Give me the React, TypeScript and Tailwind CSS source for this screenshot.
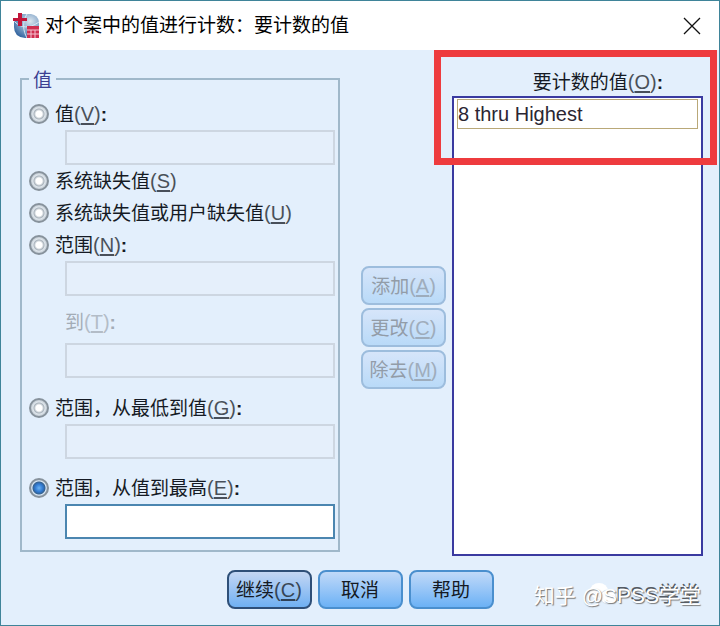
import type { InputHTMLAttributes, ReactNode } from 'react';

type RadioRowProps = {
  id: string;
  text: string;
  mnemonic: string;
  colon?: boolean;
  defaultChecked?: boolean;
};

function Caption({ text, mnemonic, colon }: { text: string; mnemonic: string; colon?: boolean }) {
  return (
    <>
      {text}
      <span className="text-xl leading-6 opacity-75">
        (<u className="underline-offset-2">{mnemonic}</u>)
      </span>
      {colon && <b>:</b>}
    </>
  );
}

function RadioRow({ id, text, mnemonic, colon, defaultChecked }: RadioRowProps) {
  return (
    <div className="flex h-8 items-center gap-1.5 pl-[7px]">
      <input
        type="radio"
        name="value-kind"
        id={id}
        defaultChecked={defaultChecked}
        className="size-5 shrink-0 appearance-none rounded-full border-2 border-[#87929c] bg-[radial-gradient(circle,#fff_0,#fff_3px,#a9b3bc_5px,#dfe6ec_6px,#c3ccd4_8px)] checked:bg-[radial-gradient(circle,#6bb2f2_0,#2f78d0_4px,#35618f_6px,#dbe8f4_7px,#b9c9d8_8px)]"
      />
      <label htmlFor={id} className="pt-px whitespace-nowrap">
        <Caption text={text} mnemonic={mnemonic} colon={colon} />
      </label>
    </div>
  );
}

function ValueInput(props: InputHTMLAttributes<HTMLInputElement>) {
  return (
    <div className="pr-[3px] pl-[43px]">
      <input
        type="text"
        className="block h-[35px] w-full border-2 border-[#4b86b0] bg-white px-1 outline-none disabled:border-[#cdd6e1] disabled:bg-[#e5effb]"
        {...props}
      />
    </div>
  );
}

function SideButton({ children }: { children: ReactNode }) {
  return (
    <button
      type="button"
      disabled
      className="h-[39px] w-full rounded-lg border-2 border-[#9dbddd] bg-linear-to-b from-[#d6e5fa] to-[#b9daf8] pt-0.5 whitespace-nowrap text-[#929ca8]"
    >
      {children}
    </button>
  );
}

function AppIcon() {
  return (
    <svg viewBox="0 0 26 26" className="size-[26px] shrink-0" aria-hidden="true">
      <defs>
        <radialGradient id="globe" cx="0.65" cy="0.3" r="0.8">
          <stop offset="0" stopColor="#dbe5ee" />
          <stop offset="0.5" stopColor="#86a8ca" />
          <stop offset="1" stopColor="#2d5f9c" />
        </radialGradient>
      </defs>
      <path d="M9 1h9q7 1 8 8v16H12Q1 24 1 14V9z" fill="url(#globe)" />
      <path d="M2 9c6 6 14 7 24 0M14 1c-5 8-4 17 0 24" fill="none" stroke="#d9e7f3" strokeWidth="1" />
      <path d="M5 0h4v5h5v3H9v5H5V8H0V5h5z" fill="#c2163a" />
      <rect x="14" y="13" width="12" height="12" fill="#d02f50" />
      <path d="M14 17h12M14 21h12M18 17v8M22 17v8" stroke="#f4c4d0" strokeWidth="1" />
    </svg>
  );
}

export default function App() {
  return (
    <div className="flex min-h-screen flex-col border border-[#3f8499] bg-[#e3effc] font-['Liberation_Sans','Noto_Sans_CJK_SC',sans-serif] text-[19px] leading-6 text-[#151a24]">
      <header className="flex h-[49px] items-center justify-between bg-white pr-[18px] pl-3">
        <div className="flex items-center gap-1.5">
          <AppIcon />
          <h1 className="whitespace-nowrap text-black">对个案中的值进行计数：要计数的值</h1>
        </div>
        <button type="button" aria-label="关闭">
          <svg viewBox="0 0 18 18" className="size-[18px]" aria-hidden="true">
            <path d="M1 1l16 16M17 1L1 17" stroke="#111" strokeWidth="1.3" />
          </svg>
        </button>
      </header>

      <main className="relative grid grid-cols-[341fr_85px_257fr] pr-4 pl-[19px]">
        <fieldset className="mt-[15px] mr-[21px] mb-1 min-w-0 border-2 border-[#a0b8ca] pb-[11px]">
          <legend className="ml-[7px] px-1 pt-1 text-[#3c3f92]">值</legend>
          <div className="pt-[5px]">
            <RadioRow id="value" text="值" mnemonic="V" colon />
            <ValueInput aria-labelledby="value" disabled />
            <RadioRow id="sysmis" text="系统缺失值" mnemonic="S" />
            <RadioRow id="usermis" text="系统缺失值或用户缺失值" mnemonic="U" />
            <RadioRow id="range" text="范围" mnemonic="N" colon />
            <ValueInput aria-label="范围" disabled />
            <label htmlFor="range-to" className="mt-3.5 mb-2 ml-[43px] block text-[#a3acb6]">
              <Caption text="到" mnemonic="T" colon />
            </label>
            <ValueInput id="range-to" disabled />
            <div className="pt-3.5">
              <RadioRow id="lowest" text="范围，从最低到值" mnemonic="G" colon />
            </div>
            <ValueInput aria-label="从最低到值" disabled />
            <div className="pt-[13px]">
              <RadioRow id="highest" text="范围，从值到最高" mnemonic="E" colon defaultChecked />
            </div>
            <ValueInput aria-label="从值到最高" />
          </div>
        </fieldset>

        <div className="mt-[216px] flex flex-col gap-[3px]">
          <SideButton>
            <Caption text="添加" mnemonic="A" />
          </SideButton>
          <SideButton>
            <Caption text="更改" mnemonic="C" />
          </SideButton>
          <SideButton>
            <Caption text="除去" mnemonic="M" />
          </SideButton>
        </div>

        <section className="flex flex-col pt-5 pl-1.5">
          <h2 id="count-label" className="self-end pr-10 pb-px">
            <Caption text="要计数的值" mnemonic="O" colon />
          </h2>
          <ul aria-labelledby="count-label" className="grow border-2 border-[#3a3aa0] bg-white px-[3px] pt-px">
            <li className="border border-[#b9a878] text-xl leading-7 text-[#2b2632]">8 thru Highest</li>
          </ul>
        </section>

        <div className="pointer-events-none absolute top-0 right-0.5 h-[115px] w-[283px] border-[7px] border-[#ee3b3e]" />
      </main>

      <footer className="relative flex justify-center gap-1.5 pt-3.5 pb-4">
        <button type="button" className="h-[39px] w-[85px] rounded-lg border-2 border-[#2e4f78] bg-linear-to-b from-[#c3d6f3] to-[#6fb0f2] pt-0.5 whitespace-nowrap">
          <Caption text="继续" mnemonic="C" />
        </button>
        <button type="button" className="h-[39px] w-[85px] rounded-lg border-2 border-[#4a8fce] bg-linear-to-b from-[#c0d9f8] to-[#6bb1f5] pt-0.5">
          取消
        </button>
        <button type="button" className="h-[39px] w-[85px] rounded-lg border-2 border-[#4a8fce] bg-linear-to-b from-[#c0d9f8] to-[#6bb1f5] pt-0.5">
          帮助
        </button>
        <svg viewBox="0 0 30 26" className="absolute right-[101px] bottom-[18px] h-[26px] w-[30px]" aria-hidden="true">
          <ellipse cx="11" cy="10" rx="9" ry="8" fill="#fff" />
          <ellipse cx="20" cy="16" rx="8" ry="7" fill="#fff" stroke="#d7e1ec" />
        </svg>
        <p className="absolute right-[18px] bottom-[17px] text-[21px] whitespace-nowrap text-white [text-shadow:1px_1px_1px_#777]">
          知乎 @S<span className="[text-shadow:1px_1px_1px_#777,-1px_-2px_0_#555b63]">PSS学堂</span>
        </p>
      </footer>
    </div>
  );
}
